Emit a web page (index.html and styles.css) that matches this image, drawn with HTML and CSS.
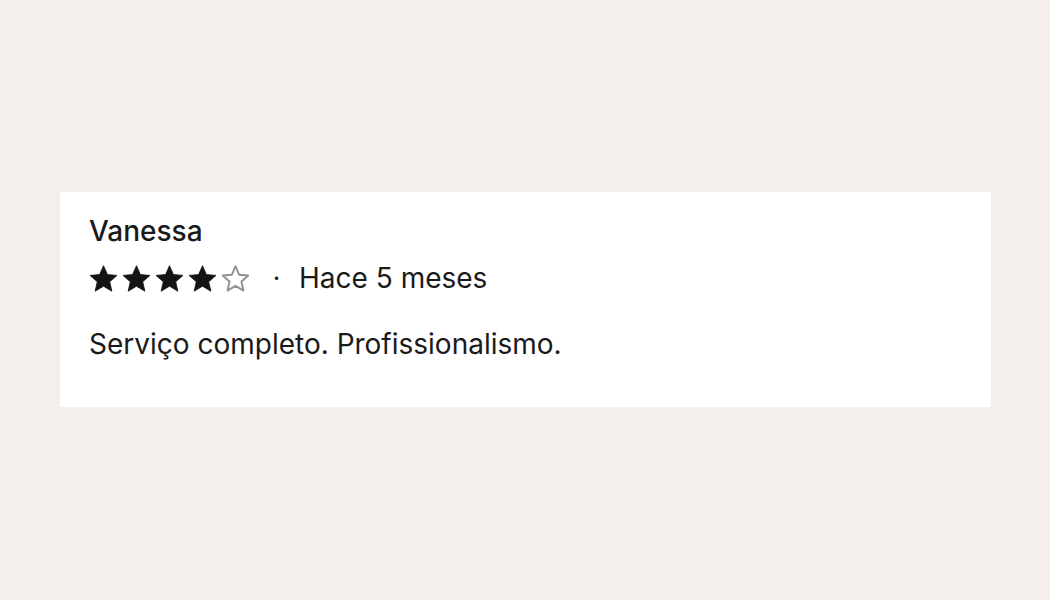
FILE: index.html
```html
<!DOCTYPE html>
<html lang="es">
<head>
    <meta charset="UTF-8">
    <title>Reseña</title>
    <link rel="stylesheet" href="styles.css">
</head>
<body>
    <div class="review">
        <div class="author">Vanessa</div>
        <div class="meta">
            <div class="stars">
                <svg class="star" viewBox="2 2 20 20"><path d="M12 2.5l2.9 6.6 7.1.6-5.4 4.7 1.6 7L12 17.7l-6.2 3.7 1.6-7L2 9.7l7.1-.6z"/></svg>
                <svg class="star" viewBox="2 2 20 20"><path d="M12 2.5l2.9 6.6 7.1.6-5.4 4.7 1.6 7L12 17.7l-6.2 3.7 1.6-7L2 9.7l7.1-.6z"/></svg>
                <svg class="star" viewBox="2 2 20 20"><path d="M12 2.5l2.9 6.6 7.1.6-5.4 4.7 1.6 7L12 17.7l-6.2 3.7 1.6-7L2 9.7l7.1-.6z"/></svg>
                <svg class="star" viewBox="2 2 20 20"><path d="M12 2.5l2.9 6.6 7.1.6-5.4 4.7 1.6 7L12 17.7l-6.2 3.7 1.6-7L2 9.7l7.1-.6z"/></svg>
                <svg class="star empty" viewBox="1.5 1.5 21 21"><path d="M12 2.5l2.9 6.6 7.1.6-5.4 4.7 1.6 7L12 17.7l-6.2 3.7 1.6-7L2 9.7l7.1-.6z"/></svg>
            </div>
            <span class="dot">·</span>
            <span class="date">Hace 5 meses</span>
        </div>
        <p class="text">Serviço completo. Profissionalismo.</p>
    </div>
</body>
</html>
```

FILE: styles.css
```css
body {
    margin: 0;
    padding: 192px 59px 0 60px;
    background: rgb(244, 239, 236);
    font-family: Inter, "Noto Sans", sans-serif;
    color: rgb(26, 26, 26);
}

.review {
    background: #fff;
    padding: 22px 29px 46px;
}

.author {
    font-size: 28px;
    font-weight: 500;
    line-height: 34px;
}

.meta {
    display: flex;
    align-items: center;
    margin-top: 13px;
    font-size: 28px;
    line-height: 34px;
}

.stars {
    display: flex;
    gap: 6px;
    padding-left: 1px;
}

.star {
    width: 27px;
    height: 27px;
    fill: rgb(20, 20, 20);
    stroke: rgb(20, 20, 20);
    stroke-width: 0.6;
    stroke-linejoin: round;
}

.star.empty {
    fill: none;
    stroke: rgb(145, 145, 145);
    stroke-width: 1.5;
}

.dot {
    margin: 0 19px 0 24px;
    font-size: 22px;
    font-weight: 600;
}

.text {
    margin: 32px 0 0;
    font-size: 28px;
    line-height: 34px;
}
```
